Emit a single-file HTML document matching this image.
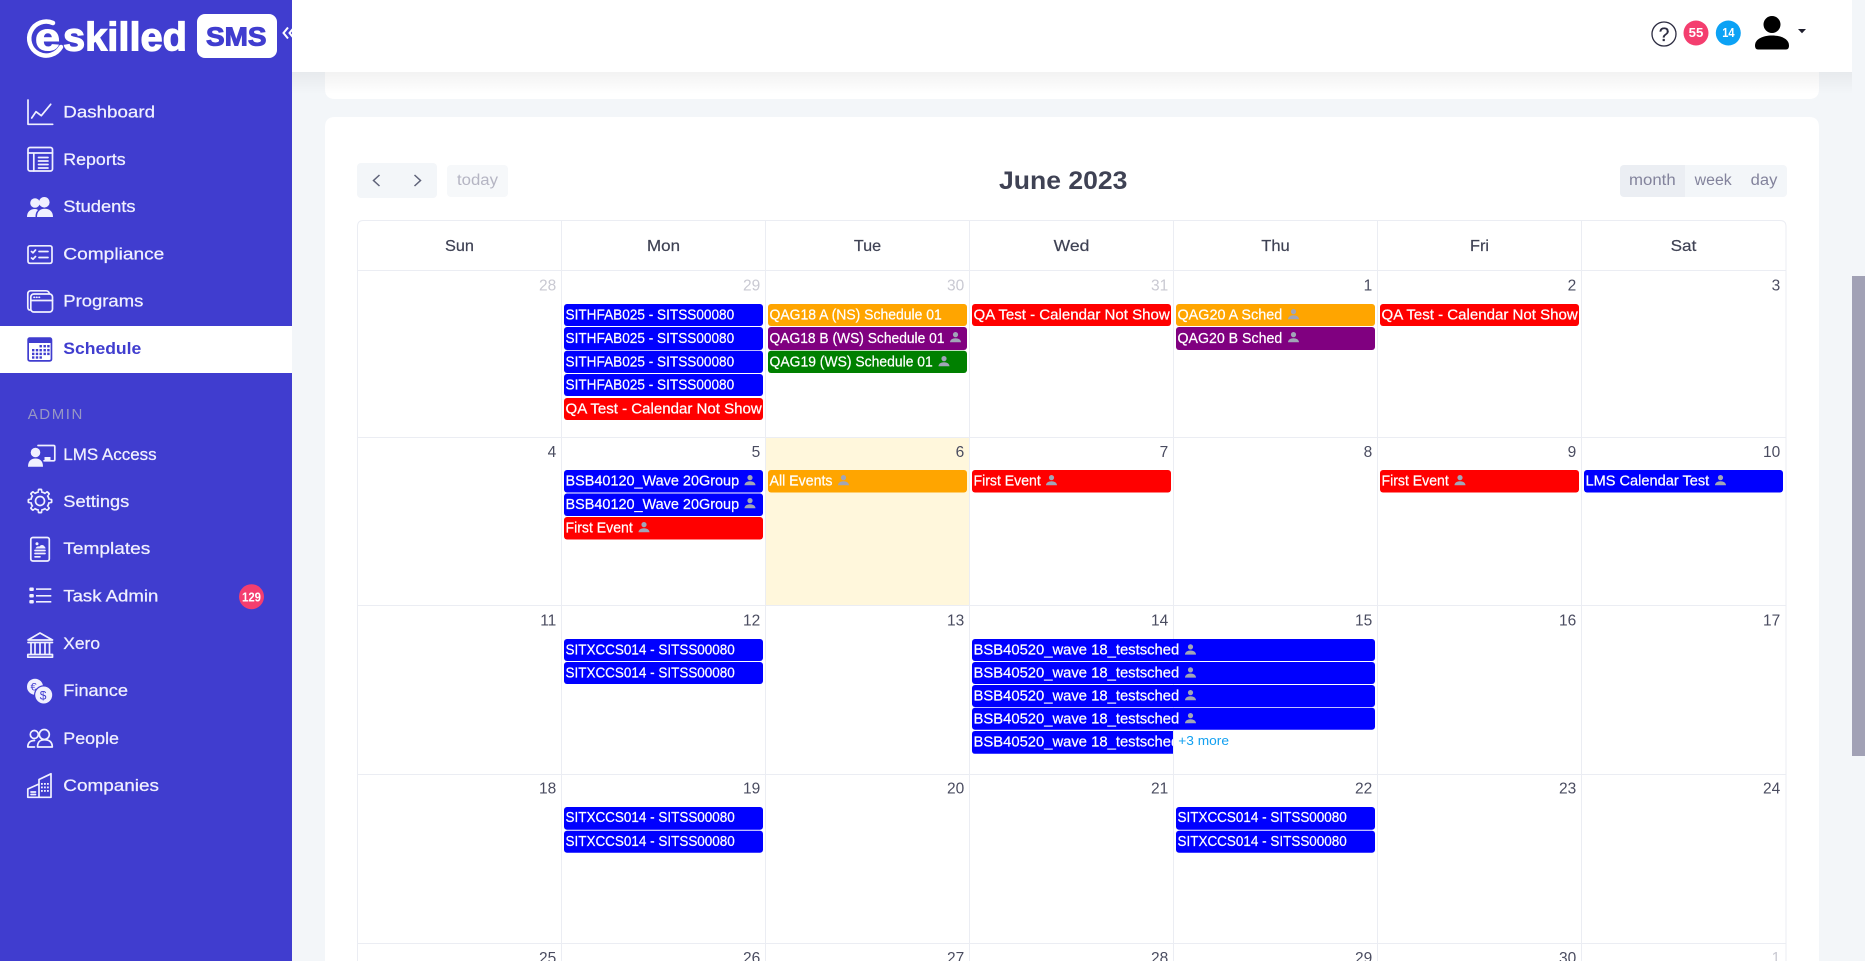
<!DOCTYPE html>
<html lang="en"><head><meta charset="utf-8"><title>Schedule</title>
<style>
html,body{margin:0;padding:0;width:1865px;height:961px;overflow:hidden;background:#f3f6f9}
svg{display:block}
text{font-family:"Liberation Sans",sans-serif}
.n{font-size:17px;fill:#f0f0ff;stroke:#f0f0ff;stroke-width:.25;transform:translateY(-.3px)}
.e{font-size:14.5px;fill:#fff;stroke:#fff;stroke-width:.22;transform:translateY(-.5px)}
.d{font-size:15.5px;fill:#4a4c60;text-anchor:end;transform:translateY(-1px)}
.o{font-size:15.5px;fill:#c9c9d2;text-anchor:end;transform:translateY(-1px)}
.h{font-size:16px;fill:#3f4254;text-anchor:middle;stroke:#3f4254;stroke-width:.2}
.t{font-size:15.5px;fill:#83839c}
.p{fill:#a1a5b7}
.i{fill:none;stroke:#f0f0ff;stroke-width:1.7;stroke-linecap:round;stroke-linejoin:round}
.f{fill:#f0f0ff}
.g{stroke:#ebedf3;stroke-width:1;fill:none}
</style></head><body>
<svg width="1865" height="961" viewBox="0 0 1865 961" xmlns="http://www.w3.org/2000/svg">
<defs>
<linearGradient id="sh" x1="0" y1="0" x2="0" y2="1"><stop offset="0" stop-color="#000" stop-opacity=".05"/><stop offset="1" stop-color="#000" stop-opacity="0"/></linearGradient>
<clipPath id="c5"><rect x="972" y="731" width="201" height="23"/></clipPath>
</defs>
<rect width="1865" height="961" fill="#f3f6f9"/>
<!-- cards -->
<path d="M325 60H1819V89Q1819 99 1809 99H335Q325 99 325 89Z" fill="#fff"/>
<path d="M335 117H1809Q1819 117 1819 127V961H325V127Q325 117 335 117Z" fill="#fff"/>
<rect x="292" y="72" width="1560" height="22" fill="url(#sh)"/>
<!-- sidebar -->
<rect width="292" height="961" fill="#403dcf"/>
<!-- logo -->
<path d="M53 23A17 17 0 1 0 61 47" fill="none" stroke="#fff" stroke-width="4.500" stroke-linecap="round"/>
<text x="35" y="50" font-size="38" font-weight="700" fill="#fff" stroke="#fff" stroke-width="1" textLength="25" lengthAdjust="spacingAndGlyphs">e</text>
<text x="63" y="50.700" font-size="40" font-weight="700" fill="#fff" stroke="#fff" stroke-width="1.200" textLength="124" lengthAdjust="spacingAndGlyphs">skilled</text>
<rect x="197" y="14" width="80" height="44" rx="8" fill="#fff"/>
<text x="206" y="45.500" font-size="26" font-weight="700" fill="#403dcf" stroke="#403dcf" stroke-width="1" textLength="60.500" lengthAdjust="spacingAndGlyphs">SMS</text>
<path d="M288 27.500L283.500 33L288 38.500M294 27.500L289.500 33L294 38.500" fill="none" stroke="#fff" stroke-width="2"/>
<!-- active row -->
<rect y="326" width="292" height="47" fill="#fff"/>
<!-- nav text -->
<text class="n" x="63.300" y="118" textLength="91.700" lengthAdjust="spacingAndGlyphs">Dashboard</text>
<text class="n" x="63.300" y="165.300" textLength="62.300" lengthAdjust="spacingAndGlyphs">Reports</text>
<text class="n" x="63.300" y="212.300" textLength="72.300" lengthAdjust="spacingAndGlyphs">Students</text>
<text class="n" x="63.300" y="260" textLength="101" lengthAdjust="spacingAndGlyphs">Compliance</text>
<text class="n" x="63.300" y="307" textLength="80" lengthAdjust="spacingAndGlyphs">Programs</text>
<text x="63.300" y="354" font-size="17" font-weight="700" fill="#403dcf" textLength="78" lengthAdjust="spacingAndGlyphs">Schedule</text>
<text x="27.700" y="419" font-size="15" fill="#9797c4" textLength="54.700" lengthAdjust="spacing">ADMIN</text>
<text class="n" x="63.300" y="460.300" textLength="93.300" lengthAdjust="spacingAndGlyphs">LMS Access</text>
<text class="n" x="63.300" y="507.300" textLength="66" lengthAdjust="spacingAndGlyphs">Settings</text>
<text class="n" x="63.300" y="554.300" textLength="87" lengthAdjust="spacingAndGlyphs">Templates</text>
<text class="n" x="63.300" y="602" textLength="95" lengthAdjust="spacingAndGlyphs">Task Admin</text>
<text class="n" x="63.300" y="649.300" textLength="36.700" lengthAdjust="spacingAndGlyphs">Xero</text>
<text class="n" x="63.300" y="696.300" textLength="64.700" lengthAdjust="spacingAndGlyphs">Finance</text>
<text class="n" x="63.300" y="744.300" textLength="55.700" lengthAdjust="spacingAndGlyphs">People</text>
<text class="n" x="63.300" y="791.300" textLength="95.700" lengthAdjust="spacingAndGlyphs">Companies</text>
<circle cx="251.500" cy="596.700" r="12.500" fill="#f43e6f"/>
<text x="242" y="601.300" font-size="12.500" font-weight="700" fill="#fff" textLength="19" lengthAdjust="spacingAndGlyphs">129</text>
<!-- nav icons -->
<path class="i" d="M28 100V124.300H52.700M31.700 118L36 111.700L41.300 115.700L50.700 104.300"/>
<g class="i"><rect x="28" y="147.500" width="24.500" height="23.500" rx="2"/><path d="M28 153H52.500M33.800 153V171M38.500 157.500H48M38.500 161H48M38.500 164.500H48M38.500 168H48"/></g>
<g class="f"><circle cx="35" cy="203" r="4.800"/><circle cx="44.300" cy="202.300" r="5.300"/><path d="M27 217C27 212 30 209 35 209C37 209 38 210 38 210C36 212 35.500 214 35.500 217Z"/><path d="M37 217C37 211.500 40 208.700 44.800 208.700S53 211.500 53 217Z"/></g>
<g class="i"><rect x="28" y="245.800" width="24" height="17.500" rx="2"/><path d="M39 251.500H48M39 257.500H48M31.500 251.500L33 252.800L35.500 250M31.500 258L33 259.200L35.500 256.500"/></g>
<g class="i" stroke-width="1.500"><path d="M30 310C28.300 310 27.800 309 27.800 307V294C27.800 291.500 29 290.800 31 290.800H46C48 290.800 49 292 49.500 293.800"/><rect x="30.800" y="294" width="21.700" height="18" rx="3"/><path d="M31 300.500H52.500M34 297.300H34.500M36.500 297.300H37M39 297.300H39.500"/></g>
<g fill="#403dcf"><path d="M30 337.300H49.500C51.300 337.300 52.300 338.300 52.300 340V359C52.300 360.700 51.300 361.700 49.500 361.700H30C28.300 361.700 27.300 360.700 27.300 359V340C27.300 338.300 28.300 337.300 30 337.300ZM29 343V359C29 359.600 29.400 360 30 360H49.500C50.100 360 50.600 359.600 50.600 359V343Z"/>
<rect x="39.500" y="345" width="2.400" height="2.400"/><rect x="43.500" y="345" width="2.400" height="2.400"/><rect x="47.200" y="345" width="2.400" height="2.400"/>
<rect x="32" y="349" width="2.400" height="2.400"/><rect x="35.800" y="349" width="2.400" height="2.400"/><rect x="39.500" y="349" width="2.400" height="2.400"/><rect x="43.500" y="349" width="2.400" height="2.400"/><rect x="47.200" y="349" width="2.400" height="2.400"/>
<rect x="32" y="352.700" width="2.400" height="2.400"/><rect x="35.800" y="352.700" width="2.400" height="2.400"/><rect x="39.500" y="352.700" width="2.400" height="2.400"/><rect x="43.500" y="352.700" width="2.400" height="2.400"/><rect x="47.200" y="352.700" width="2.400" height="2.400"/>
<rect x="32" y="356.300" width="2.400" height="2.400"/><rect x="35.800" y="356.300" width="2.400" height="2.400"/><rect x="39.500" y="356.300" width="2.400" height="2.400"/></g>
<g class="f"><circle cx="35.500" cy="452.500" r="4.800"/><path d="M28 466.800C28 461 31 458.500 35.500 458.500S43 461 43 466.800Z"/><rect x="44.500" y="457" width="6" height="4.500"/></g>
<path class="i" d="M38 445.500H53.500C54.300 445.500 54.800 446 54.800 446.800V459.500C54.800 460.300 54.300 460.800 53.500 460.800H44"/>
<g class="f"><rect x="37.600" y="488.500" width="4.800" height="25" rx="1.500"/><rect x="37.600" y="488.500" width="4.800" height="25" rx="1.500" transform="rotate(45 40 501)"/><rect x="37.600" y="488.500" width="4.800" height="25" rx="1.500" transform="rotate(90 40 501)"/><rect x="37.600" y="488.500" width="4.800" height="25" rx="1.500" transform="rotate(135 40 501)"/><circle cx="40" cy="501" r="10"/></g>
<g fill="#403dcf"><rect x="38.900" y="490.200" width="2.200" height="21.600" rx="1"/><rect x="38.900" y="490.200" width="2.200" height="21.600" rx="1" transform="rotate(45 40 501)"/><rect x="38.900" y="490.200" width="2.200" height="21.600" rx="1" transform="rotate(90 40 501)"/><rect x="38.900" y="490.200" width="2.200" height="21.600" rx="1" transform="rotate(135 40 501)"/><circle cx="40" cy="501" r="8.300"/></g>
<circle class="i" cx="40" cy="501" r="4.500"/>
<g class="i" stroke-width="1.500"><rect x="30.800" y="537.500" width="18.500" height="23.500" rx="2"/><path d="M35 550.500H45M35 553.500H45M35 556.800H40"/></g>
<g class="f"><circle cx="37" cy="543.800" r="1.500"/><path d="M35.500 548.500C36 546.500 38 546 39.500 546.500C40.500 544.500 43.500 544.500 44.500 546.500C45.300 547 45.500 548 45.500 548.500Z"/></g>
<g class="f"><rect x="29.300" y="587.500" width="4.500" height="3.500" rx="1"/><rect x="29.300" y="594" width="4.500" height="3.500" rx="1"/><rect x="29.300" y="600" width="4.500" height="3.500" rx="1"/><rect x="36" y="588.300" width="15.300" height="1.600"/><rect x="36" y="595" width="15.300" height="1.600"/><rect x="36" y="601" width="15.300" height="1.600"/></g>
<g class="i" stroke-width="1.500"><path d="M28 640L40 633L52.500 640Z"/><path d="M28 642.500H52.500M31 643V654M35 643V654M40 643V654M45 643V654M49.500 643V654"/><rect x="27.800" y="654.500" width="24.700" height="2.700"/></g>
<circle class="f" cx="35" cy="686.700" r="8"/>
<circle cx="43.700" cy="695" r="9.700" fill="#403dcf"/>
<circle class="f" cx="43.700" cy="695" r="8.500"/>
<text x="30.500" y="690.500" font-size="11" fill="#403dcf">€</text>
<text x="39.800" y="699.500" font-size="12" fill="#403dcf">$</text>
<g class="i" stroke-width="1.600"><circle cx="34.300" cy="734.500" r="4"/><circle cx="44.300" cy="734.500" r="5"/><path d="M37.500 747C37.500 741.500 40 739.800 44.500 739.800S52.300 741.500 52.300 747Z"/><path d="M34.500 740.500C30 740.500 27.800 743 27.800 747H34.500"/></g>
<g class="i" stroke-width="1.400"><path d="M39 797.300V779.500L51 773.800V797.300H27.800V789L39 784"/><path d="M31 792H35.500M31 794.500H35.500"/></g>
<g class="f"><rect x="41" y="783" width="1.800" height="1.800"/><rect x="44" y="783" width="1.800" height="1.800"/><rect x="47" y="783" width="1.800" height="1.800"/><rect x="41" y="786.500" width="1.800" height="1.800"/><rect x="44" y="786.500" width="1.800" height="1.800"/><rect x="47" y="786.500" width="1.800" height="1.800"/><rect x="41" y="790" width="1.800" height="1.800"/><rect x="44" y="790" width="1.800" height="1.800"/><rect x="47" y="790" width="1.800" height="1.800"/></g>
<!-- topbar -->
<rect x="292" width="1560" height="72" fill="#fff"/>
<circle cx="1664" cy="34" r="12" fill="none" stroke="#2b2b40" stroke-width="1.300"/>
<text x="1664" y="41" font-size="19" fill="#2b2b40" text-anchor="middle" stroke="#2b2b40" stroke-width=".3">?</text>
<circle cx="1696" cy="33" r="12.500" fill="#f43e6f"/>
<text x="1688.700" y="37" font-size="12.500" font-weight="700" fill="#fff" textLength="14.700" lengthAdjust="spacingAndGlyphs">55</text>
<circle cx="1728.300" cy="33" r="12.500" fill="#0ca2f5"/>
<text x="1722.200" y="37" font-size="12.500" font-weight="700" fill="#fff" textLength="12.300" lengthAdjust="spacingAndGlyphs">14</text>
<circle cx="1772" cy="24.500" r="8.500"/>
<path d="M1755 45.500C1755 39 1763 35.500 1772 35.500S1789 39 1789 45.500C1789 48 1788 49.500 1786 49.500H1758C1756 49.500 1755 48 1755 45.500Z"/>
<path d="M1798 29H1806L1802 33.300Z" fill="#1e1e2d"/>
<!-- scrollbar -->
<rect x="1852" y="276" width="13" height="480" fill="#a1a1b5"/>
<!-- toolbar -->
<rect x="357" y="163" width="80" height="35" rx="4" fill="#f3f6f9"/>
<path d="M379.500 175L373.500 180.500L379.500 186M414.500 175L420.500 180.500L414.500 186" fill="none" stroke="#5e6278" stroke-width="1.500"/>
<rect x="447" y="165" width="61" height="32" rx="4" fill="#f6f8fa"/>
<text x="457" y="185" font-size="15.500" fill="#b5b5c3" textLength="41" lengthAdjust="spacingAndGlyphs">today</text>
<text x="999" y="189" font-size="25" font-weight="700" fill="#3f4254" textLength="128.400" lengthAdjust="spacingAndGlyphs">June 2023</text>
<rect x="1620" y="165" width="167" height="32" rx="4" fill="#f3f6f9"/>
<path d="M1685 165H1624C1621.800 165 1620 166.800 1620 169V193C1620 195.200 1621.800 197 1624 197H1685Z" fill="#ebeef3"/>
<text class="t" x="1629" y="185" textLength="46.700" lengthAdjust="spacingAndGlyphs">month</text>
<text class="t" x="1694.700" y="185" textLength="37" lengthAdjust="spacingAndGlyphs">week</text>
<text class="t" x="1750.700" y="185" textLength="26.700" lengthAdjust="spacingAndGlyphs">day</text>
<!-- calendar grid -->
<rect x="766" y="438" width="203" height="167" fill="#fff7dc"/>
<path class="g" d="M357.500 961V226.500Q357.500 220.500 363.500 220.500H1780Q1786 220.500 1786 226.500V961"/>
<path class="g" d="M561.500 220V961M765.500 220V961M969.500 220V961M1173.500 220V961M1377.500 220V961M1581.500 220V961M357 270.500H1786M357 437.500H1786M357 605.500H1786M357 774.500H1786M357 943.500H1786"/>
<!-- headers -->
<text class="h" x="459.500" y="251" textLength="29" lengthAdjust="spacingAndGlyphs">Sun</text>
<text class="h" x="663.500" y="251" textLength="33" lengthAdjust="spacingAndGlyphs">Mon</text>
<text class="h" x="867.500" y="251" textLength="27.300" lengthAdjust="spacingAndGlyphs">Tue</text>
<text class="h" x="1071.500" y="251" textLength="35.700" lengthAdjust="spacingAndGlyphs">Wed</text>
<text class="h" x="1275.500" y="251" textLength="28.500" lengthAdjust="spacingAndGlyphs">Thu</text>
<text class="h" x="1479.500" y="251" textLength="19" lengthAdjust="spacingAndGlyphs">Fri</text>
<text class="h" x="1683.500" y="251" textLength="25.700" lengthAdjust="spacingAndGlyphs">Sat</text>
<!-- dates -->
<text class="o" x="556.300" y="291.700">28</text><text class="o" x="760.300" y="291.700">29</text><text class="o" x="964.300" y="291.700">30</text><text class="o" x="1168.300" y="291.700">31</text><text class="d" x="1372.300" y="291.700">1</text><text class="d" x="1576.300" y="291.700">2</text><text class="d" x="1780.300" y="291.700">3</text>
<text class="d" x="556.300" y="458">4</text><text class="d" x="760.300" y="458">5</text><text class="d" x="964.300" y="458">6</text><text class="d" x="1168.300" y="458">7</text><text class="d" x="1372.300" y="458">8</text><text class="d" x="1576.300" y="458">9</text><text class="d" x="1780.300" y="458">10</text>
<text class="d" x="556.300" y="626.700">11</text><text class="d" x="760.300" y="626.700">12</text><text class="d" x="964.300" y="626.700">13</text><text class="d" x="1168.300" y="626.700">14</text><text class="d" x="1372.300" y="626.700">15</text><text class="d" x="1576.300" y="626.700">16</text><text class="d" x="1780.300" y="626.700">17</text>
<text class="d" x="556.300" y="794.700">18</text><text class="d" x="760.300" y="794.700">19</text><text class="d" x="964.300" y="794.700">20</text><text class="d" x="1168.300" y="794.700">21</text><text class="d" x="1372.300" y="794.700">22</text><text class="d" x="1576.300" y="794.700">23</text><text class="d" x="1780.300" y="794.700">24</text>
<text class="d" x="556.300" y="964">25</text><text class="d" x="760.300" y="964">26</text><text class="d" x="964.300" y="964">27</text><text class="d" x="1168.300" y="964">28</text><text class="d" x="1372.300" y="964">29</text><text class="d" x="1576.300" y="964">30</text><text class="o" x="1780.300" y="964">1</text>
<!-- events row 1 -->
<rect x="564" y="304" width="199" height="22" rx="3" fill="#0000ff"/><text class="e" x="565.500" y="320" textLength="168.700" lengthAdjust="spacingAndGlyphs">SITHFAB025 - SITSS00080</text>
<rect x="564" y="327" width="199" height="23" rx="3" fill="#0000ff"/><text class="e" x="565.500" y="343.300" textLength="168.700" lengthAdjust="spacingAndGlyphs">SITHFAB025 - SITSS00080</text>
<rect x="564" y="350.700" width="199" height="22.300" rx="3" fill="#0000ff"/><text class="e" x="565.500" y="367" textLength="168.700" lengthAdjust="spacingAndGlyphs">SITHFAB025 - SITSS00080</text>
<rect x="564" y="374" width="199" height="22" rx="3" fill="#0000ff"/><text class="e" x="565.500" y="390" textLength="168.700" lengthAdjust="spacingAndGlyphs">SITHFAB025 - SITSS00080</text>
<rect x="564" y="398" width="199" height="22" rx="3" fill="#ff0000"/><text class="e" x="565.500" y="414" textLength="196.300" lengthAdjust="spacingAndGlyphs">QA Test - Calendar Not Show</text>
<rect x="768" y="304" width="199" height="22" rx="3" fill="#ffa500"/><text class="e" x="769.500" y="320" textLength="172.300" lengthAdjust="spacingAndGlyphs">QAG18 A (NS) Schedule 01</text>
<rect x="768" y="327" width="199" height="23" rx="3" fill="#800080"/><text class="e" x="769.500" y="343.300" textLength="175" lengthAdjust="spacingAndGlyphs">QAG18 B (WS) Schedule 01</text>
<path class="p" transform="translate(950 332)" d="M5.500 0a2.600 2.600 0 1 1 0 5.200a2.600 2.600 0 1 1 0-5.200zM0 10.300C0 7.600 2.600 6.200 5.500 6.200S11 7.600 11 10.300z"/>
<rect x="768" y="350.700" width="199" height="22.300" rx="3" fill="#008000"/><text class="e" x="769.500" y="367" textLength="163.300" lengthAdjust="spacingAndGlyphs">QAG19 (WS) Schedule 01</text>
<path class="p" transform="translate(938.500 356)" d="M5.500 0a2.600 2.600 0 1 1 0 5.200a2.600 2.600 0 1 1 0-5.200zM0 10.300C0 7.600 2.600 6.200 5.500 6.200S11 7.600 11 10.300z"/>
<rect x="972" y="304" width="199" height="22" rx="3" fill="#ff0000"/><text class="e" x="973.500" y="320" textLength="196.300" lengthAdjust="spacingAndGlyphs">QA Test - Calendar Not Show</text>
<rect x="1176" y="304" width="199" height="22" rx="3" fill="#ffa500"/><text class="e" x="1177.500" y="320" textLength="104.700" lengthAdjust="spacingAndGlyphs">QAG20 A Sched</text>
<path class="p" transform="translate(1288 309)" d="M5.500 0a2.600 2.600 0 1 1 0 5.200a2.600 2.600 0 1 1 0-5.200zM0 10.300C0 7.600 2.600 6.200 5.500 6.200S11 7.600 11 10.300z"/>
<rect x="1176" y="327" width="199" height="23" rx="3" fill="#800080"/><text class="e" x="1177.500" y="343.300" textLength="104.700" lengthAdjust="spacingAndGlyphs">QAG20 B Sched</text>
<path class="p" transform="translate(1288 332)" d="M5.500 0a2.600 2.600 0 1 1 0 5.200a2.600 2.600 0 1 1 0-5.200zM0 10.300C0 7.600 2.600 6.200 5.500 6.200S11 7.600 11 10.300z"/>
<rect x="1380" y="304" width="199" height="22" rx="3" fill="#ff0000"/><text class="e" x="1381.500" y="320" textLength="196.300" lengthAdjust="spacingAndGlyphs">QA Test - Calendar Not Show</text>
<!-- events row 2 -->
<rect x="564" y="470" width="199" height="22.500" rx="3" fill="#0000ff"/><text class="e" x="565.500" y="486" textLength="173.600" lengthAdjust="spacingAndGlyphs">BSB40120_Wave 20Group</text>
<path class="p" transform="translate(744.500 475)" d="M5.500 0a2.600 2.600 0 1 1 0 5.200a2.600 2.600 0 1 1 0-5.200zM0 10.300C0 7.600 2.600 6.200 5.500 6.200S11 7.600 11 10.300z"/>
<rect x="564" y="493.500" width="199" height="22.500" rx="3" fill="#0000ff"/><text class="e" x="565.500" y="509.500" textLength="173.600" lengthAdjust="spacingAndGlyphs">BSB40120_Wave 20Group</text>
<path class="p" transform="translate(744.500 498)" d="M5.500 0a2.600 2.600 0 1 1 0 5.200a2.600 2.600 0 1 1 0-5.200zM0 10.300C0 7.600 2.600 6.200 5.500 6.200S11 7.600 11 10.300z"/>
<rect x="564" y="517" width="199" height="22.500" rx="3" fill="#ff0000"/><text class="e" x="565.500" y="533" textLength="67.300" lengthAdjust="spacingAndGlyphs">First Event</text>
<path class="p" transform="translate(638.500 522)" d="M5.500 0a2.600 2.600 0 1 1 0 5.200a2.600 2.600 0 1 1 0-5.200zM0 10.300C0 7.600 2.600 6.200 5.500 6.200S11 7.600 11 10.300z"/>
<rect x="768" y="470" width="199" height="22.500" rx="3" fill="#ffa500"/><text class="e" x="769.500" y="486" textLength="63" lengthAdjust="spacingAndGlyphs">All Events</text>
<path class="p" transform="translate(838 475)" d="M5.500 0a2.600 2.600 0 1 1 0 5.200a2.600 2.600 0 1 1 0-5.200zM0 10.300C0 7.600 2.600 6.200 5.500 6.200S11 7.600 11 10.300z"/>
<rect x="972" y="470" width="199" height="22.500" rx="3" fill="#ff0000"/><text class="e" x="973.500" y="486" textLength="67.300" lengthAdjust="spacingAndGlyphs">First Event</text>
<path class="p" transform="translate(1046 475)" d="M5.500 0a2.600 2.600 0 1 1 0 5.200a2.600 2.600 0 1 1 0-5.200zM0 10.300C0 7.600 2.600 6.200 5.500 6.200S11 7.600 11 10.300z"/>
<rect x="1380" y="470" width="199" height="22.500" rx="3" fill="#ff0000"/><text class="e" x="1381.500" y="486" textLength="67.300" lengthAdjust="spacingAndGlyphs">First Event</text>
<path class="p" transform="translate(1454.500 475)" d="M5.500 0a2.600 2.600 0 1 1 0 5.200a2.600 2.600 0 1 1 0-5.200zM0 10.300C0 7.600 2.600 6.200 5.500 6.200S11 7.600 11 10.300z"/>
<rect x="1584" y="470" width="199" height="22.500" rx="3" fill="#0000ff"/><text class="e" x="1585.500" y="486" textLength="123.700" lengthAdjust="spacingAndGlyphs">LMS Calendar Test</text>
<path class="p" transform="translate(1715 475)" d="M5.500 0a2.600 2.600 0 1 1 0 5.200a2.600 2.600 0 1 1 0-5.200zM0 10.300C0 7.600 2.600 6.200 5.500 6.200S11 7.600 11 10.300z"/>
<!-- events row 3 -->
<rect x="564" y="639" width="199" height="22" rx="3" fill="#0000ff"/><text class="e" x="565.500" y="655" textLength="169.300" lengthAdjust="spacingAndGlyphs">SITXCCS014 - SITSS00080</text>
<rect x="564" y="662" width="199" height="22" rx="3" fill="#0000ff"/><text class="e" x="565.500" y="678" textLength="169.300" lengthAdjust="spacingAndGlyphs">SITXCCS014 - SITSS00080</text>
<rect x="972" y="639" width="403" height="22" rx="3" fill="#0000ff"/><text class="e" x="973.500" y="655" textLength="205.700" lengthAdjust="spacingAndGlyphs">BSB40520_wave 18_testsched</text>
<path class="p" transform="translate(1185 644.300)" d="M5.500 0a2.600 2.600 0 1 1 0 5.200a2.600 2.600 0 1 1 0-5.200zM0 10.300C0 7.600 2.600 6.200 5.500 6.200S11 7.600 11 10.300z"/>
<rect x="972" y="662" width="403" height="22" rx="3" fill="#0000ff"/><text class="e" x="973.500" y="678" textLength="205.700" lengthAdjust="spacingAndGlyphs">BSB40520_wave 18_testsched</text>
<path class="p" transform="translate(1185 667.300)" d="M5.500 0a2.600 2.600 0 1 1 0 5.200a2.600 2.600 0 1 1 0-5.200zM0 10.300C0 7.600 2.600 6.200 5.500 6.200S11 7.600 11 10.300z"/>
<rect x="972" y="685" width="403" height="22" rx="3" fill="#0000ff"/><text class="e" x="973.500" y="701" textLength="205.700" lengthAdjust="spacingAndGlyphs">BSB40520_wave 18_testsched</text>
<path class="p" transform="translate(1185 690)" d="M5.500 0a2.600 2.600 0 1 1 0 5.200a2.600 2.600 0 1 1 0-5.200zM0 10.300C0 7.600 2.600 6.200 5.500 6.200S11 7.600 11 10.300z"/>
<rect x="972" y="707.700" width="403" height="22" rx="3" fill="#0000ff"/><text class="e" x="973.500" y="724" textLength="205.700" lengthAdjust="spacingAndGlyphs">BSB40520_wave 18_testsched</text>
<path class="p" transform="translate(1185 713)" d="M5.500 0a2.600 2.600 0 1 1 0 5.200a2.600 2.600 0 1 1 0-5.200zM0 10.300C0 7.600 2.600 6.200 5.500 6.200S11 7.600 11 10.300z"/>
<path d="M975 731H1173V753.700H975Q972 753.700 972 750.700V734Q972 731 975 731Z" fill="#0000ff"/>
<g clip-path="url(#c5)"><text class="e" x="973.500" y="747" textLength="205.700" lengthAdjust="spacingAndGlyphs">BSB40520_wave 18_testsched</text></g>
<text x="1178.300" y="745" font-size="13" fill="#12a0f0" textLength="50.700" lengthAdjust="spacingAndGlyphs">+3 more</text>
<!-- events row 4 -->
<rect x="564" y="807" width="199" height="22.700" rx="3" fill="#0000ff"/><text class="e" x="565.500" y="822.700" textLength="169.300" lengthAdjust="spacingAndGlyphs">SITXCCS014 - SITSS00080</text>
<rect x="564" y="830.700" width="199" height="22" rx="3" fill="#0000ff"/><text class="e" x="565.500" y="846.700" textLength="169.300" lengthAdjust="spacingAndGlyphs">SITXCCS014 - SITSS00080</text>
<rect x="1176" y="807" width="199" height="22.700" rx="3" fill="#0000ff"/><text class="e" x="1177.500" y="822.700" textLength="169.300" lengthAdjust="spacingAndGlyphs">SITXCCS014 - SITSS00080</text>
<rect x="1176" y="830.700" width="199" height="22" rx="3" fill="#0000ff"/><text class="e" x="1177.500" y="846.700" textLength="169.300" lengthAdjust="spacingAndGlyphs">SITXCCS014 - SITSS00080</text>
</svg>
</body></html>
